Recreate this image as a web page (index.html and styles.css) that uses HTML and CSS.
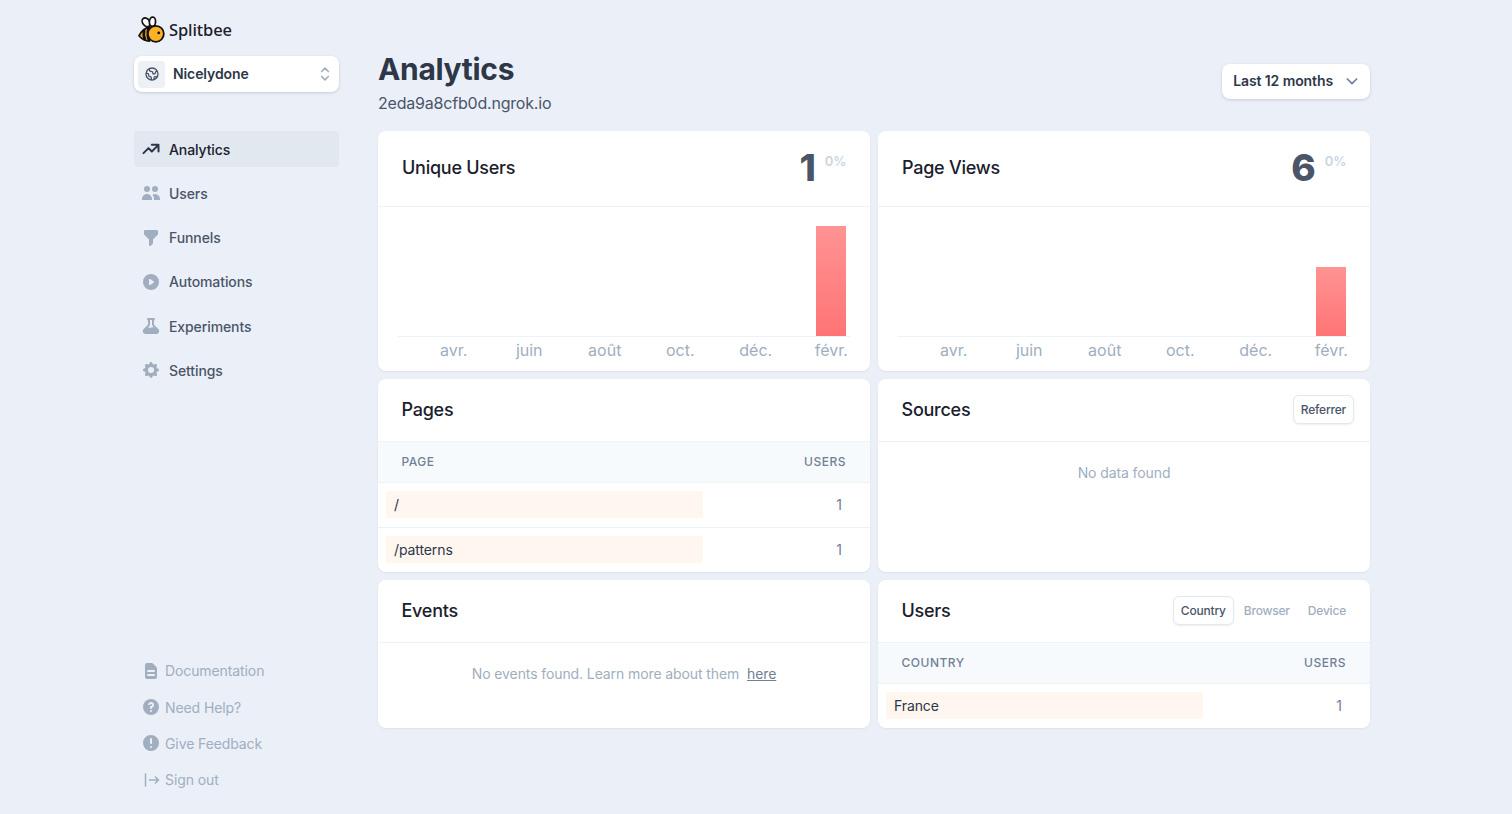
FILE: index.html
```html
<!DOCTYPE html>
<html lang="fr">
<head>
  <meta charset="UTF-8">
  <meta name="viewport" content="width=device-width, initial-scale=1.0">
  <title>Splitbee Analytics</title>
  <link rel="stylesheet" href="styles.css">
</head>
<body>
  <div class="page">
    <aside class="sidebar">
      <div class="logo">
        <svg class="bee" viewBox="0 0 28 28" width="27" height="27">
          <ellipse cx="8.500" cy="6.500" rx="3.600" ry="5" transform="rotate(-40 8.500 6.500)" fill="#fff" stroke="#111" stroke-width="1.800"/>
          <ellipse cx="15" cy="6" rx="3.200" ry="4.800" transform="rotate(5 15 6)" fill="#fff" stroke="#111" stroke-width="1.800"/>
          <path d="M1 20.500 C3.500 15.500 7 12.500 12 11.500 L12 26 C8 26 4 24 1 20.500 Z" fill="#fbb124" stroke="#111" stroke-width="1.800" stroke-linejoin="round"/>
          <path d="M6.500 14.500 C5.500 18 6 22 7.500 25 M11 12 C10 16 10 22 11.500 26" fill="none" stroke="#111" stroke-width="2.800"/>
          <circle cx="18.500" cy="18.500" r="8.300" fill="#fbb124" stroke="#111" stroke-width="1.800"/>
          <circle cx="21.500" cy="17.500" r="1.500" fill="#111"/>
        </svg>
        <span class="logo-text">Splitbee</span>
      </div>

      <div class="switcher">
        <span class="switcher-icon">
          <svg viewBox="0 0 24 24" width="16" height="16" fill="none" stroke="#4a5568" stroke-width="2" stroke-linecap="round" stroke-linejoin="round"><path d="M3.055 11H5a2 2 0 012 2v1a2 2 0 002 2 2 2 0 012 2v2.945M8 3.935V5.500A2.500 2.500 0 0010.500 8h.5a2 2 0 012 2 2 2 0 104 0 2 2 0 012-2h1.064M15 20.488V18a2 2 0 012-2h3.064M21 12a9 9 0 11-18 0 9 9 0 0118 0z"/></svg>
        </span>
        <span class="switcher-name">Nicelydone</span>
        <svg class="switcher-arrows" viewBox="0 0 24 24" width="20" height="20" fill="none" stroke="#a0aec0" stroke-width="2" stroke-linecap="round" stroke-linejoin="round"><path d="M8 9l4-4 4 4m0 6l-4 4-4-4"/></svg>
      </div>

      <nav class="nav">
        <a class="nav-item active" href="#">
          <svg viewBox="0 0 24 24" width="20" height="20" fill="none" stroke="#2d3748" stroke-width="2.400" stroke-linecap="round" stroke-linejoin="round"><path d="M13 7h8m0 0v8m0-8l-8 8-4-4-6 6"/></svg>
          Analytics
        </a>
        <a class="nav-item" href="#">
          <svg viewBox="0 0 20 20" width="20" height="20" fill="#a0aec0"><path d="M9 6a3 3 0 11-6 0 3 3 0 016 0zM17 6a3 3 0 11-6 0 3 3 0 016 0zM12.930 17c.046-.327.07-.66.07-1a6.970 6.970 0 00-1.500-4.330A5 5 0 0119 16v1h-6.070zM6 11a5 5 0 015 5v1H1v-1a5 5 0 015-5z"/></svg>
          Users
        </a>
        <a class="nav-item" href="#">
          <svg viewBox="0 0 20 20" width="20" height="20" fill="#a0aec0"><path d="M3 3a1 1 0 011-1h12a1 1 0 011 1v3a1 1 0 01-.293.707L12 11.414V15a1 1 0 01-.293.707l-2 2A1 1 0 018 17v-5.586L3.293 6.707A1 1 0 013 6V3z"/></svg>
          Funnels
        </a>
        <a class="nav-item" href="#">
          <svg viewBox="0 0 20 20" width="20" height="20" fill="#a0aec0"><path fill-rule="evenodd" d="M10 18a8 8 0 100-16 8 8 0 000 16zM9.555 7.168A1 1 0 008 8v4a1 1 0 001.555.832l3-2a1 1 0 000-1.664l-3-2z"/></svg>
          Automations
        </a>
        <a class="nav-item" href="#">
          <svg viewBox="0 0 20 20" width="20" height="20" fill="#a0aec0"><path fill-rule="evenodd" d="M7 2a1 1 0 00-.707 1.707L7 4.414v3.758a1 1 0 01-.293.707l-4 4C.817 14.769 2.156 18 4.828 18h10.343c2.673 0 4.012-3.231 2.122-5.121l-4-4A1 1 0 0113 8.172V4.414l.707-.707A1 1 0 0013 2H7zm2 6.172V4h2v4.172a3 3 0 00.879 2.120l1.027 1.028a4 4 0 00-2.171.102l-.47.156a4 4 0 01-2.530 0l-.563-.187a1.993 1.993 0 00-.114-.035l1.063-1.063A3 3 0 009 8.172z"/></svg>
          Experiments
        </a>
        <a class="nav-item" href="#">
          <svg viewBox="0 0 20 20" width="20" height="20" fill="#a0aec0"><path fill-rule="evenodd" d="M11.490 3.170c-.38-1.560-2.600-1.560-2.980 0a1.532 1.532 0 01-2.286.948c-1.372-.836-2.942.734-2.106 2.106.54.886.061 2.042-.947 2.287-1.561.379-1.561 2.600 0 2.978a1.532 1.532 0 01.947 2.287c-.836 1.372.734 2.942 2.106 2.106a1.532 1.532 0 012.287.947c.379 1.561 2.600 1.561 2.978 0a1.533 1.533 0 012.287-.947c1.372.836 2.942-.734 2.106-2.106a1.533 1.533 0 01.947-2.287c1.561-.379 1.561-2.600 0-2.978a1.532 1.532 0 01-.947-2.287c.836-1.372-.734-2.942-2.106-2.106a1.532 1.532 0 01-2.287-.947zM10 13a3 3 0 100-6 3 3 0 000 6z"/></svg>
          Settings
        </a>
      </nav>

      <div class="help">
        <a class="help-item" href="#">
          <svg viewBox="0 0 20 20" width="20" height="20" fill="#a0aec0"><path fill-rule="evenodd" d="M4 4a2 2 0 012-2h4.586A2 2 0 0112 2.586L15.414 6A2 2 0 0116 7.414V16a2 2 0 01-2 2H6a2 2 0 01-2-2V4zm2 6a1 1 0 011-1h6a1 1 0 110 2H7a1 1 0 01-1-1zm1 3a1 1 0 100 2h6a1 1 0 100-2H7z"/></svg>
          Documentation
        </a>
        <a class="help-item" href="#">
          <svg viewBox="0 0 20 20" width="20" height="20" fill="#a0aec0"><path fill-rule="evenodd" d="M18 10a8 8 0 11-16 0 8 8 0 0116 0zm-8-3a1 1 0 00-.867.5 1 1 0 11-1.731-1A3 3 0 0113 8a3.001 3.001 0 01-2 2.830V11a1 1 0 11-2 0v-1a1 1 0 011-1 1 1 0 100-2zm0 8a1 1 0 100-2 1 1 0 000 2z"/></svg>
          Need Help?
        </a>
        <a class="help-item" href="#">
          <svg viewBox="0 0 20 20" width="20" height="20" fill="#a0aec0"><path fill-rule="evenodd" d="M18 10a8 8 0 11-16 0 8 8 0 0116 0zm-7 4a1 1 0 11-2 0 1 1 0 012 0zm-1-9a1 1 0 00-1 1v4a1 1 0 102 0V6a1 1 0 00-1-1z"/></svg>
          Give Feedback
        </a>
        <a class="help-item" href="#">
          <svg viewBox="0 0 20 20" width="20" height="20" fill="none" stroke="#a0aec0" stroke-width="1.500" stroke-linecap="round" stroke-linejoin="round"><path d="M4.500 4v12M8.500 10h9m-3-3l3 3-3 3"/></svg>
          Sign out
        </a>
      </div>
    </aside>

    <main class="main">
      <header class="main-head">
        <div>
          <h1>Analytics</h1>
          <p class="domain">2eda9a8cfb0d.ngrok.io</p>
        </div>
        <button class="range">
          Last 12 months
          <svg viewBox="0 0 24 24" width="16" height="16" fill="none" stroke="#718096" stroke-width="2.500" stroke-linecap="round" stroke-linejoin="round"><path d="M19 9l-7 7-7-7"/></svg>
        </button>
      </header>

      <div class="grid">
        <section class="card">
          <div class="stat-head">
            <h2>Unique Users</h2>
            <div class="stat"><span class="stat-num">1</span><span class="stat-pct">0%</span></div>
          </div>
          <div class="chart">
            <div class="plot"><div class="bar bar-full"></div></div>
            <div class="axis"><span>avr.</span><span>juin</span><span>août</span><span>oct.</span><span>déc.</span><span>févr.</span></div>
          </div>
        </section>

        <section class="card">
          <div class="stat-head">
            <h2>Page Views</h2>
            <div class="stat"><span class="stat-num">6</span><span class="stat-pct">0%</span></div>
          </div>
          <div class="chart">
            <div class="plot"><div class="bar bar-part"></div></div>
            <div class="axis"><span>avr.</span><span>juin</span><span>août</span><span>oct.</span><span>déc.</span><span>févr.</span></div>
          </div>
        </section>

        <section class="card">
          <div class="card-head"><h2>Pages</h2></div>
          <div class="thead"><span>Page</span><span>Users</span></div>
          <div class="row"><span class="row-label">/</span><span class="row-num">1</span></div>
          <div class="row"><span class="row-label">/patterns</span><span class="row-num">1</span></div>
        </section>

        <section class="card">
          <div class="card-head tabbed">
            <h2>Sources</h2>
            <div class="tabs"><button class="tab on">Referrer</button></div>
          </div>
          <p class="empty">No data found</p>
        </section>

        <section class="card">
          <div class="card-head"><h2>Events</h2></div>
          <p class="empty">No events found. Learn more about them <a href="#">here</a></p>
        </section>

        <section class="card">
          <div class="card-head tabbed">
            <h2>Users</h2>
            <div class="tabs">
              <button class="tab on">Country</button>
              <button class="tab">Browser</button>
              <button class="tab">Device</button>
            </div>
          </div>
          <div class="thead"><span>Country</span><span>Users</span></div>
          <div class="row"><span class="row-label">France</span><span class="row-num">1</span></div>
        </section>
      </div>
    </main>
  </div>
</body>
</html>
```

FILE: styles.css
```css
* {
  box-sizing: border-box;
}
body {
  margin: 0;
  background-color: #ebf0f8;
  font-family: 'Inter', 'Liberation Sans', sans-serif;
  color: #2d3748;
}
a {
  text-decoration: none;
}
.page {
  display: flex;
  gap: 39px;
  width: 1236px;
  height: 814px;
  margin-left: 134px;
}

/* sidebar */
.sidebar {
  display: flex;
  flex-direction: column;
  flex: none;
  width: 205px;
  padding-top: 15px;
  padding-bottom: 22.300px;
}
.logo {
  display: flex;
  align-items: center;
  gap: 4px;
  height: 29px;
  padding-left: 4px;
}
.logo-text {
  font-family: 'Noto Sans', sans-serif;
  font-size: 16.500px;
  font-weight: 500;
  letter-spacing: -0.1px;
  color: #1a202c;
}
.switcher {
  display: flex;
  align-items: center;
  height: 36px;
  margin-top: 12px;
  padding: 0 4px 0 4px;
  background: #fff;
  border-radius: 8px;
  box-shadow: 0 1px 3px rgba(45, 55, 72, 0.2);
}
.switcher-icon {
  display: flex;
  align-items: center;
  justify-content: center;
  width: 27px;
  height: 27px;
  background: #edf0f4;
  border-radius: 4px;
}
.switcher-name {
  flex: 1;
  margin-left: 8px;
  padding-bottom: 1px;
  font-size: 14px;
  font-weight: 600;
  letter-spacing: -0.1px;
}
.nav {
  display: flex;
  flex-direction: column;
  gap: 8.300px;
  margin-top: 39px;
}
.nav-item {
  display: flex;
  align-items: center;
  gap: 8px;
  height: 36px;
  padding-left: 7px;
  border-radius: 4px;
  font-size: 14px;
  font-weight: 500;
  letter-spacing: -0.1px;
  color: #4a5568;
}
.nav-item svg {
  flex: none;
}
.nav-item.active {
  background: #e2e8f0;
  color: #1a202c;
}
.help {
  display: flex;
  flex-direction: column;
  gap: 12.300px;
  margin-top: auto;
}
.help-item {
  display: flex;
  align-items: center;
  gap: 4px;
  height: 24px;
  padding-left: 7px;
  font-size: 14px;
  letter-spacing: -0.1px;
  color: #a0aec0;
}

/* main */
.main {
  flex: 1;
  min-width: 0;
  padding-top: 50px;
}
.main-head {
  display: flex;
  align-items: flex-start;
  justify-content: space-between;
  height: 81px;
}
h1 {
  margin: 0;
  font-size: 30px;
  line-height: 38px;
  font-weight: 700;
  letter-spacing: -0.33px;
}
.domain {
  margin: 5px 0 0;
  font-size: 16px;
  line-height: 20px;
  letter-spacing: -0.2px;
  color: #4a5568;
}
.range {
  display: flex;
  align-items: center;
  gap: 11px;
  height: 35px;
  margin-top: 14px;
  padding: 0 10px 2px 11px;
  background: #fff;
  border: 0;
  border-radius: 8px;
  box-shadow: 0 1px 3px rgba(45, 55, 72, 0.2);
  font-family: inherit;
  font-size: 14px;
  font-weight: 600;
  letter-spacing: -0.1px;
  color: #2d3748;
}
.grid {
  display: grid;
  grid-template-columns: 1fr 1fr;
  grid-template-rows: 240px 193px 148px;
  gap: 8px;
}
.card {
  overflow: hidden;
  background: #fff;
  border-radius: 8px;
  box-shadow: 0 1px 2px rgba(45, 55, 72, 0.08);
}
h2 {
  margin: 0;
  font-size: 18px;
  font-weight: 500;
  letter-spacing: -0.25px;
  color: #1a202c;
}

/* stat cards */
.stat-head {
  display: flex;
  align-items: center;
  justify-content: space-between;
  height: 76px;
  padding: 0 24px 2px;
  border-bottom: 1px solid #edf2f7;
}
.stat {
  display: flex;
  align-items: flex-start;
  gap: 9px;
}
.stat-num {
  font-size: 37px;
  line-height: 46px;
  font-weight: 800;
  color: #4a5568;
}
.stat-pct {
  margin-top: 8px;
  font-size: 13px;
  font-weight: 600;
  letter-spacing: -0.2px;
  color: #cbd5e0;
}
.chart {
  padding: 0 20px;
}
.plot {
  display: flex;
  align-items: flex-end;
  justify-content: flex-end;
  height: 130px;
  padding-right: 4px;
  border-bottom: 1px solid #edf2f7;
}
.bar {
  width: 30px;
  background: linear-gradient(#ff9393, #ff7474);
}
.bar-full {
  height: 110px;
}
.bar-part {
  height: 69px;
}
.axis {
  display: grid;
  grid-template-columns: repeat(6, 1fr);
  margin: 3px -19px 0 18px;
  font-size: 16px;
  line-height: 20px;
  text-align: center;
  color: #a0aec0;
}

/* table cards */
.card-head {
  display: flex;
  align-items: center;
  justify-content: space-between;
  height: 63px;
  padding: 0 24px 2px 23.500px;
  border-bottom: 1px solid #edf2f7;
}
.tabbed {
  padding-right: 16px;
}
.tabs {
  display: flex;
  gap: 2px;
}
.tab {
  height: 29px;
  padding: 0 7px;
  background: none;
  border: 1px solid transparent;
  border-radius: 6px;
  font-family: inherit;
  font-size: 12px;
  font-weight: 500;
  letter-spacing: -0.2px;
  color: #a0aec0;
}
.tab.on {
  background: #fff;
  border-color: #e2e8f0;
  box-shadow: 0 1px 2px rgba(45, 55, 72, 0.08);
  color: #4a5568;
}
.thead {
  display: flex;
  align-items: center;
  justify-content: space-between;
  height: 41px;
  padding: 0 24px 1px 23.500px;
  background: #f7fafc;
  border-bottom: 1px solid #edf2f7;
  font-size: 12px;
  font-weight: 500;
  letter-spacing: 0.5px;
  text-transform: uppercase;
  color: #718096;
}
.row {
  display: flex;
  align-items: center;
  justify-content: space-between;
  height: 44.500px;
  padding: 0 28px 1px 8px;
  border-bottom: 1px solid #edf2f7;
}
.row:last-child {
  border-bottom: 0;
}
.row-label {
  width: 317px;
  height: 27px;
  padding-left: 8px;
  background: #fff6f0;
  border-radius: 2px;
  font-size: 14px;
  line-height: 27px;
  letter-spacing: -0.1px;
  color: #2d3748;
}
.row-num {
  font-size: 14px;
  color: #718096;
}
.empty {
  margin: 22px 0 0;
  font-size: 14px;
  line-height: 18px;
  letter-spacing: -0.1px;
  text-align: center;
  color: #a0aec0;
}
.empty a {
  margin-left: 4px;
  color: #718096;
  text-decoration: underline;
}
```
